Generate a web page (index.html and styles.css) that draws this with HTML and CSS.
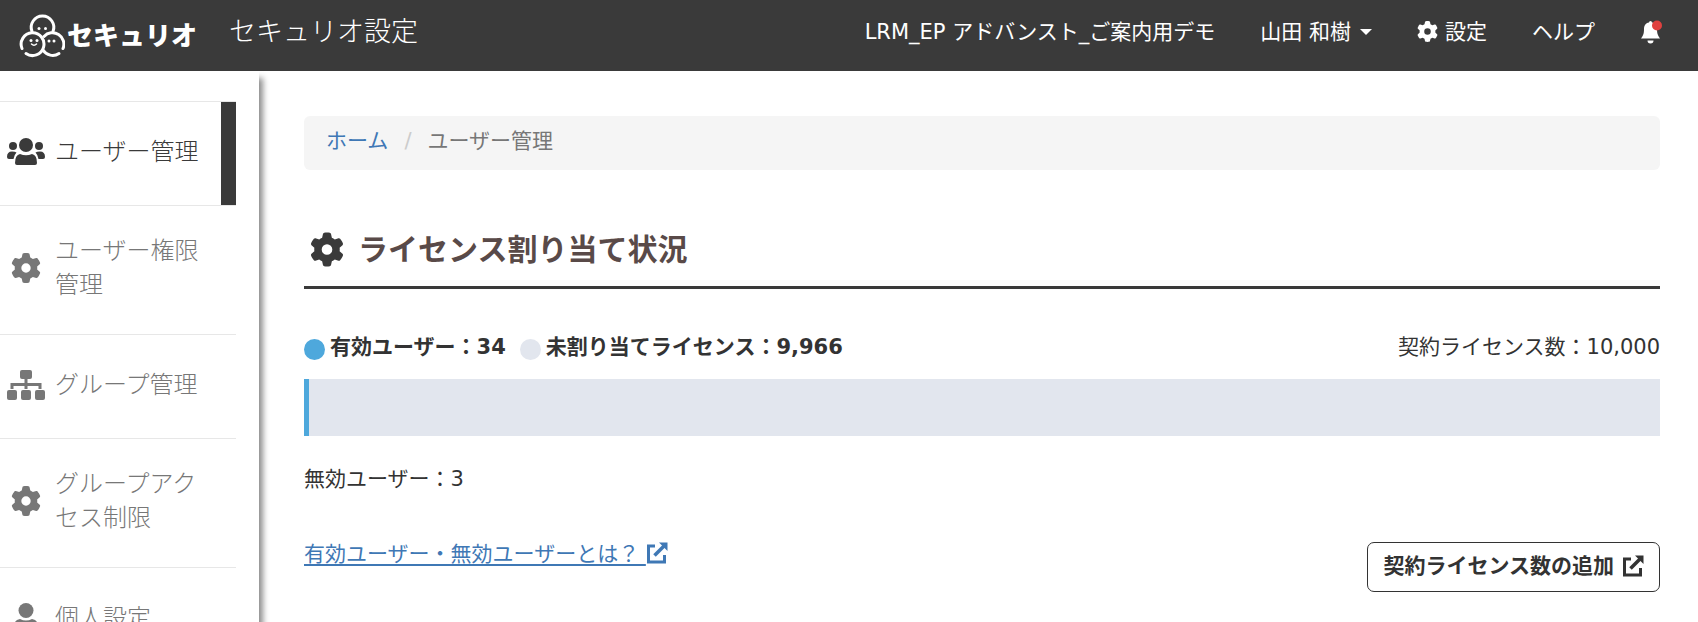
FILE: index.html
```html
<!DOCTYPE html>
<html lang="ja">
<head>
    <meta charset="UTF-8">
    <title>セキュリオ設定</title>
    <link rel="stylesheet" href="styles.css">
</head>
<body>
    <!-- shared icons -->
    <svg class="icon-defs" aria-hidden="true">
        <symbol id="icon-gear" viewBox="0 0 512 512">
            <path d="M495.9 166.6c3.2 8.7 .5 18.4-6.4 24.6l-43.3 39.4c1.1 8.3 1.7 16.8 1.7 25.4s-.6 17.1-1.7 25.4l43.3 39.4c6.9 6.2 9.6 15.9 6.4 24.6c-4.4 11.9-9.7 23.3-15.8 34.3l-4.7 8.1c-6.6 11-14 21.4-22.1 31.2c-5.9 7.2-15.7 9.6-24.5 6.8l-55.7-17.7c-13.4 10.3-28.2 18.9-44 25.4l-12.5 57.1c-2 9.1-9 16.3-18.2 17.8c-13.8 2.3-28 3.5-42.5 3.5s-28.7-1.2-42.5-3.5c-9.2-1.5-16.2-8.7-18.2-17.8l-12.5-57.1c-15.8-6.5-30.6-15.1-44-25.4L83.1 425.9c-8.8 2.8-18.6 .3-24.5-6.8c-8.1-9.8-15.5-20.2-22.1-31.2l-4.7-8.1c-6.1-11-11.4-22.4-15.8-34.3c-3.2-8.7-.5-18.4 6.4-24.6l43.3-39.4C64.6 273.1 64 264.6 64 256s.6-17.1 1.7-25.4L22.4 191.2c-6.9-6.2-9.6-15.9-6.4-24.6c4.4-11.9 9.7-23.3 15.8-34.3l4.7-8.1c6.6-11 14-21.4 22.1-31.2c5.9-7.2 15.7-9.6 24.5-6.8l55.7 17.7c13.4-10.3 28.2-18.9 44-25.4l12.5-57.1c2-9.1 9-16.3 18.2-17.8C227.3 1.2 241.5 0 256 0s28.7 1.2 42.5 3.5c9.2 1.5 16.2 8.7 18.2 17.8l12.5 57.1c15.8 6.5 30.6 15.1 44 25.4l55.7-17.7c8.8-2.8 18.6-.3 24.5 6.8c8.1 9.8 15.5 20.2 22.1 31.2l4.7 8.1c6.1 11 11.4 22.4 15.8 34.3zM256 336a80 80 0 1 0 0-160 80 80 0 1 0 0 160z"/>
        </symbol>
        <symbol id="icon-external" viewBox="0 0 22 22">
            <path d="M9 4H2.500V20H18.500V13" fill="none" stroke="currentColor" stroke-width="3"/>
            <path d="M8.500 13.500L18 4" fill="none" stroke="currentColor" stroke-width="3.600"/>
            <path d="M13 0.500H21.500V9Z"/>
        </symbol>
    </svg>

    <header class="header">
        <a href="#" class="logo">
            <svg class="logo-mark" viewBox="0 0 46 44" aria-hidden="true">
                <g fill="none" stroke="#fff" stroke-width="3" stroke-linecap="round">
                    <path d="M13 17.500A11.300 11.300 0 1 1 34 17.500"/>
                    <path d="M3 34.500A11.400 11.400 0 1 1 7 39.500"/>
                    <path d="M25 22.500A11.400 11.400 0 0 1 44 34.500"/>
                    <path d="M40 39.500A11.400 11.400 0 0 1 24 36"/>
                    <path d="M12.500 30Q15 32.500 17.500 30" stroke-width="1.500"/>
                </g>
                <g fill="#fff">
                    <circle cx="20" cy="14.500" r="1.500"/>
                    <circle cx="26.500" cy="14.500" r="1.500"/>
                    <circle cx="12" cy="26.500" r="1.500"/>
                    <circle cx="18" cy="26.500" r="1.500"/>
                    <circle cx="30" cy="27" r="1.500"/>
                    <circle cx="35" cy="27" r="1.500"/>
                </g>
            </svg>
            <span class="logo-text">セキュリオ</span>
        </a>
        <span class="header-title">セキュリオ設定</span>
        <nav class="header-nav">
            <span>LRM_EP アドバンスト_ご案内用デモ</span>
            <button type="button" class="user-btn">山田 和樹<span class="caret"></span></button>
            <a href="#"><svg class="nav-gear"><use href="#icon-gear"/></svg>設定</a>
            <a href="#">ヘルプ</a>
            <button type="button" class="bell-btn" aria-label="通知">
                <svg viewBox="0 0 22 24">
                    <path d="M9 2.500A1.500 1.500 0 0 1 12 2.500C15.500 3 17 6 17 9C17 14 18 15.500 20 18.500H1C3 15.500 4 14 4 9C4 6 5.500 3 9 2.500Z" fill="#fff"/>
                    <path d="M7.500 20.500H13.500A3 3 0 0 1 7.500 20.500Z" fill="#fff"/>
                    <circle cx="17" cy="5.500" r="5" fill="#e0413f"/>
                </svg>
            </button>
        </nav>
    </header>

    <div class="container">
        <aside class="sidebar">
            <ul class="menu">
                <li class="active"><a href="#">
                    <svg viewBox="0 0 38 28">
                        <circle cx="19" cy="7" r="7"/>
                        <circle cx="6" cy="8" r="4"/>
                        <circle cx="32" cy="8" r="4"/>
                        <path d="M8 25Q8 17 13 16Q19 18.500 25 16Q30 17 30 25Q30 27 28 27H10Q8 27 8 25Z"/>
                        <path d="M0 19Q0 13.500 5 13.500Q8 13.500 9.500 14.500Q7 17 6.500 21H2Q0 21 0 19Z"/>
                        <path d="M38 19Q38 13.500 33 13.500Q30 13.500 28.500 14.500Q31 17 31.500 21H36Q38 21 38 19Z"/>
                    </svg>
                    <span>ユーザー管理</span>
                </a></li>
                <li><a href="#">
                    <svg class="menu-gear"><use href="#icon-gear"/></svg>
                    <span>ユーザー権限管理</span>
                </a></li>
                <li><a href="#">
                    <svg viewBox="0 0 38 30">
                        <rect x="13" y="0" width="12" height="9" rx="2"/>
                        <rect x="0" y="20" width="10" height="10" rx="2"/>
                        <rect x="14" y="20" width="10" height="10" rx="2"/>
                        <rect x="28" y="20" width="10" height="10" rx="2"/>
                        <path d="M19 9V19M5 19V14.500H33V19" fill="none" stroke="currentColor" stroke-width="3"/>
                    </svg>
                    <span>グループ管理</span>
                </a></li>
                <li><a href="#">
                    <svg class="menu-gear"><use href="#icon-gear"/></svg>
                    <span>グループアクセス制限</span>
                </a></li>
                <li><a href="#">
                    <svg viewBox="0 0 38 30">
                        <circle cx="19" cy="7.500" r="7.500"/>
                        <path d="M6 27Q6 17 13 16Q19 19 25 16Q32 17 32 27Q32 30 29 30H9Q6 30 6 27Z"/>
                    </svg>
                    <span>個人設定</span>
                </a></li>
            </ul>
        </aside>

        <main class="main">
            <nav class="breadcrumb">
                <a href="#">ホーム</a>
                <span class="slash">/</span>
                <span>ユーザー管理</span>
            </nav>

            <h1><svg><use href="#icon-gear"/></svg>ライセンス割り当て状況</h1>

            <div class="legend">
                <span class="dot dot-active"></span>
                <strong>有効ユーザー：34</strong>
                <span class="dot dot-free"></span>
                <strong>未割り当てライセンス：9,966</strong>
                <span class="total">契約ライセンス数：10,000</span>
            </div>
            <div class="bar"><div class="bar-used" style="width: 0.34%"></div></div>
            <p class="disabled-users">無効ユーザー：3</p>

            <div class="actions">
                <a href="#" class="help-link">有効ユーザー・無効ユーザーとは？ <svg><use href="#icon-external"/></svg></a>
                <button type="button" class="add-btn">契約ライセンス数の追加<svg><use href="#icon-external"/></svg></button>
            </div>
        </main>
    </div>
</body>
</html>
```
FILE: styles.css
```css
* {
    box-sizing: border-box;
}

body {
    margin: 0;
    font-family: "DejaVu Sans", "Noto Sans CJK JP", sans-serif;
    font-size: 21px;
    line-height: 30px;
    color: #333;
    background-color: #fff;
}

a {
    color: #3f78b5;
    text-decoration: none;
}

button {
    font: inherit;
    color: inherit;
    background: none;
    border: none;
    padding: 0;
    cursor: pointer;
}

svg {
    fill: currentColor;
    flex-shrink: 0;
}

.icon-defs {
    display: none;
}

/* header */
.header {
    display: flex;
    align-items: center;
    height: 71px;
    padding: 0 36px 8px 19px;
    color: #fff;
    background-color: #3a3a3a;
}

.header a {
    color: #fff;
}

.logo {
    display: flex;
    align-items: center;
    padding-top: 8px;
}

.logo-mark {
    width: 46px;
    height: 44px;
}

.logo-text {
    margin-left: 2px;
    font-size: 26px;
    font-weight: 900;
}

.header-title {
    margin-left: 32px;
    font-size: 27px;
    font-weight: 300;
}

.header-nav {
    display: flex;
    align-items: center;
    gap: 45px;
    margin-left: auto;
}

.header-nav a,
.user-btn {
    display: flex;
    align-items: center;
}

.caret {
    margin-left: 9px;
    border-top: 6px solid #fff;
    border-left: 6px solid transparent;
    border-right: 6px solid transparent;
}

.nav-gear {
    width: 21px;
    height: 21px;
    margin-right: 7px;
}

.bell-btn svg {
    display: block;
    width: 22px;
    height: 24px;
}

/* sidebar */
.container {
    display: flex;
    min-height: calc(100vh - 71px);
}

.sidebar {
    flex: 0 0 259px;
    padding: 30px 23px 0 0;
    box-shadow: 4px 7px 6px rgba(0, 0, 0, 0.45);
    clip-path: inset(0 -16px 0 0);
}

.menu {
    margin: 0;
    padding: 0;
    list-style: none;
    font-size: 24px;
    font-weight: 300;
    line-height: 34px;
}

.menu li {
    border-top: 1px solid #e7e7e7;
}

.menu a {
    display: flex;
    align-items: center;
    gap: 10px;
    min-height: 103px;
    padding: 28px 30px 32px 7px;
    color: #777;
}

.menu svg {
    width: 38px;
    height: 30px;
}

.menu .active a {
    padding-right: 15px;
    border-right: 15px solid #3a3a3a;
    color: #3a3a3a;
}

/* main */
.main {
    flex: 1;
    padding: 45px 38px 30px 45px;
}

.breadcrumb {
    display: flex;
    padding: 10px 22px 14px;
    border-radius: 6px;
    color: #777;
    background-color: #f5f5f5;
}

.slash {
    margin: 0 16px;
    color: #ccc;
}

h1 {
    display: flex;
    align-items: center;
    margin: 56px 0 0;
    padding: 0 6px 13px;
    border-bottom: 3px solid #3a3a3a;
    font-size: 30px;
    line-height: 47px;
    color: #594a48;
}

h1 svg {
    width: 34px;
    height: 35px;
    margin-right: 14px;
    color: #3a3a3a;
}

.legend {
    display: flex;
    align-items: center;
    margin: 43px 0 17px;
}

.dot {
    width: 21px;
    height: 21px;
    margin-top: 4px;
    margin-right: 5px;
    border-radius: 50%;
}

.dot-active {
    background-color: #4ea8dc;
}

.dot-free {
    margin-left: 14px;
    background-color: #e2e6ee;
}

.total {
    margin-left: auto;
}

.bar {
    height: 57px;
    background-color: #e2e6ee;
}

.bar-used {
    height: 100%;
    background-color: #4ea8dc;
}

.disabled-users {
    margin: 28px 0 0;
}

.actions {
    display: flex;
    justify-content: space-between;
    align-items: flex-start;
    margin-top: 45px;
}

.help-link {
    text-decoration: underline;
    text-decoration-thickness: 2px;
    text-underline-offset: 3px;
}

.help-link svg,
.add-btn svg {
    width: 22px;
    height: 22px;
}

.help-link svg {
    vertical-align: -3px;
}

.add-btn {
    display: flex;
    align-items: center;
    gap: 8px;
    height: 50px;
    margin-top: 3px;
    padding: 0 15px 2px;
    border: 1px solid #333;
    border-radius: 7px;
    font-weight: bold;
}
```
